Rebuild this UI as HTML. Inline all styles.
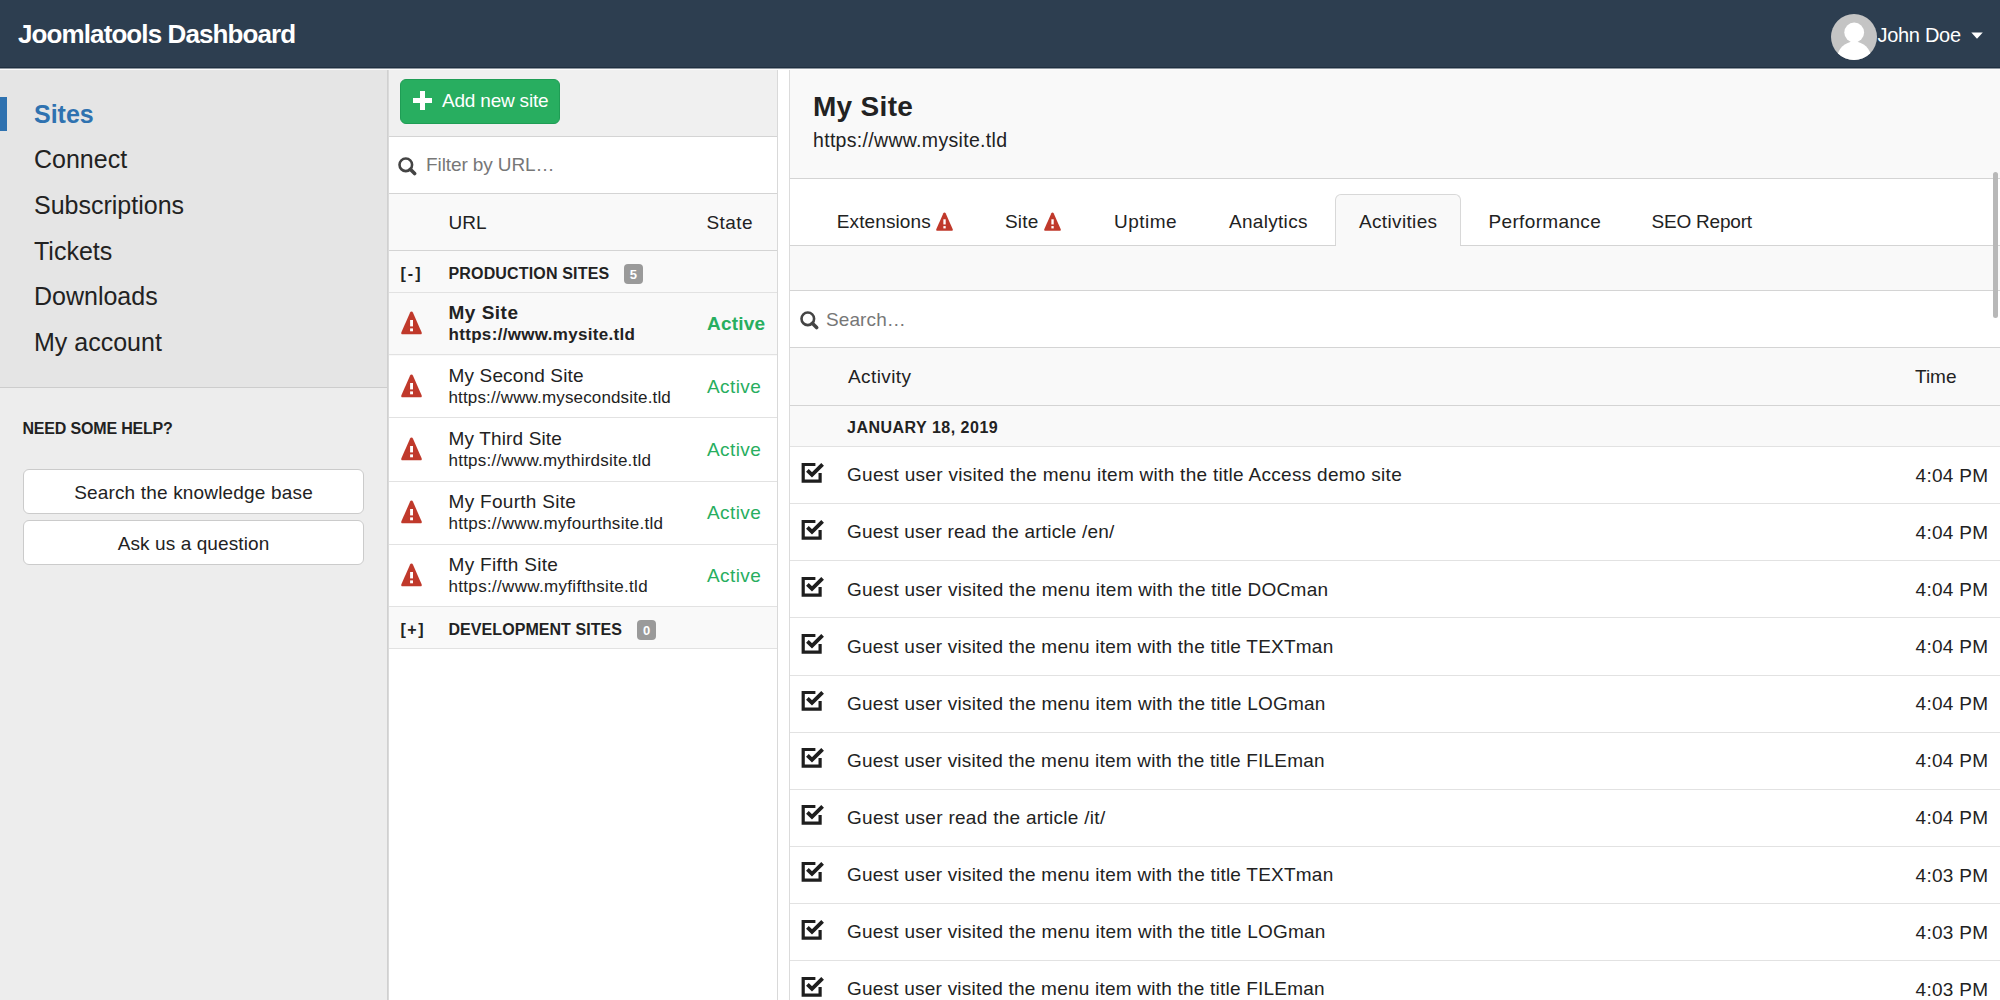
<!DOCTYPE html>
<html><head><meta charset="utf-8"><title>Joomlatools Dashboard</title>
<style>
html,body{margin:0;padding:0;width:2000px;height:1000px;overflow:hidden;background:#fff}
body{position:relative;font-family:"Liberation Sans",sans-serif}
body>div{position:absolute}
.t{white-space:nowrap}
</style></head><body>
<div style="left:0px;top:0px;width:2000px;height:67px;background:#2d3e50"></div>
<div style="left:0px;top:67px;width:2000px;height:1px;background:#1f2f40"></div>
<div style="left:0px;top:68px;width:2000px;height:1px;background:#8f98a1"></div>
<div style="left:0px;top:69px;width:2000px;height:1px;background:#fcfcfc"></div>
<div class="t" style="left:18px;top:21.19px;font-size:26px;line-height:26px;color:#fff;font-weight:700;letter-spacing:-0.9px;">Joomlatools Dashboard</div>
<svg style="position:absolute;left:1831px;top:14px" width="46" height="46" viewBox="0 0 46 46">
<defs><clipPath id="cc"><circle cx="23" cy="23" r="23"/></clipPath></defs>
<circle cx="23" cy="23" r="23" fill="#c4c4c4"/>
<g clip-path="url(#cc)" fill="#fff"><circle cx="23.2" cy="18.5" r="9.9"/><circle cx="23.2" cy="44.6" r="17"/></g></svg>
<div class="t" style="left:1877.5px;top:25.07px;font-size:20px;line-height:20px;color:#fff;letter-spacing:-0.3px;">John Doe</div>
<svg style="position:absolute;left:1971px;top:32px" width="12" height="7" viewBox="0 0 12 7"><path d="M0.3 0.5H11.8L6 6.7Z" fill="#fff"/></svg>
<div style="left:0px;top:70px;width:387px;height:317px;background:#e5e5e5"></div>
<div style="left:0px;top:387px;width:388px;height:1px;background:#cdcdcd"></div>
<div style="left:0px;top:388px;width:387px;height:612px;background:#ededed"></div>
<div style="left:387px;top:70px;width:1px;height:930px;background:#d0d0d0"></div>
<div style="left:388px;top:70px;width:1px;height:930px;background:#dadada"></div>
<div style="left:0px;top:97px;width:7px;height:34px;background:#2f72b0"></div>
<div class="t" style="left:34px;top:101.83px;font-size:25px;line-height:25px;color:#2f72b0;font-weight:700;">Sites</div>
<div class="t" style="left:34px;top:147.48px;font-size:25px;line-height:25px;color:#222;">Connect</div>
<div class="t" style="left:34px;top:193.13px;font-size:25px;line-height:25px;color:#222;">Subscriptions</div>
<div class="t" style="left:34px;top:238.78px;font-size:25px;line-height:25px;color:#222;">Tickets</div>
<div class="t" style="left:34px;top:284.43px;font-size:25px;line-height:25px;color:#222;">Downloads</div>
<div class="t" style="left:34px;top:330.08px;font-size:25px;line-height:25px;color:#222;">My account</div>
<div class="t" style="left:22.5px;top:420.95px;font-size:16px;line-height:16px;color:#222;font-weight:700;letter-spacing:-0.18px;">NEED SOME HELP?</div>
<div style="left:23px;top:469px;width:341px;height:45px;box-sizing:border-box;border:1.5px solid #cbcbcb;border-radius:6px;background:#fff"></div>
<div class="t" style="left:23px;width:341px;text-align:center;top:482.51px;font-size:19px;line-height:19px;color:#222;letter-spacing:0.17px">Search the knowledge base</div>
<div style="left:23px;top:520px;width:341px;height:45px;box-sizing:border-box;border:1.5px solid #cbcbcb;border-radius:6px;background:#fff"></div>
<div class="t" style="left:23px;width:341px;text-align:center;top:533.91px;font-size:19px;line-height:19px;color:#222;letter-spacing:0.1px">Ask us a question</div>
<div style="left:389px;top:70px;width:388px;height:66px;background:#f0f0f0"></div>
<div style="left:389px;top:136px;width:388px;height:1px;background:#d4d4d4"></div>
<div style="left:389px;top:137px;width:388px;height:56px;background:#fff"></div>
<div style="left:389px;top:193px;width:388px;height:1px;background:#d4d4d4"></div>
<div style="left:389px;top:194px;width:388px;height:56px;background:#f9f9f9"></div>
<div style="left:389px;top:250px;width:388px;height:1px;background:#d4d4d4"></div>
<div style="left:389px;top:251px;width:388px;height:41px;background:#f9f9f9"></div>
<div style="left:389px;top:292px;width:388px;height:1px;background:#e2e2e2"></div>
<div style="left:389px;top:293px;width:388px;height:63px;background:#f9f9f9"></div>
<div style="left:389px;top:356px;width:388px;height:63px;background:#fff"></div>
<div style="left:389px;top:419px;width:388px;height:63px;background:#fff"></div>
<div style="left:389px;top:482px;width:388px;height:63px;background:#fff"></div>
<div style="left:389px;top:545px;width:388px;height:63px;background:#fff"></div>
<div style="left:389px;top:607px;width:388px;height:41px;background:#f9f9f9"></div>
<div style="left:389px;top:649px;width:388px;height:351px;background:#fff"></div>
<div style="left:389px;top:354px;width:388px;height:1px;background:#e2e2e2"></div>
<div style="left:389px;top:417px;width:388px;height:1px;background:#e2e2e2"></div>
<div style="left:389px;top:481px;width:388px;height:1px;background:#e2e2e2"></div>
<div style="left:389px;top:544px;width:388px;height:1px;background:#e2e2e2"></div>
<div style="left:389px;top:606px;width:388px;height:1px;background:#e2e2e2"></div>
<div style="left:389px;top:648px;width:388px;height:1px;background:#e2e2e2"></div>
<div style="left:777px;top:70px;width:1px;height:930px;background:#d9d9d9"></div>
<div style="left:778px;top:70px;width:11px;height:930px;background:#fff"></div>
<div style="left:789px;top:70px;width:1px;height:930px;background:#dbdbdb"></div>
<div style="left:400px;top:79px;width:160px;height:45px;box-sizing:border-box;border:1.5px solid #1f9d55;border-radius:6px;background:#28ae60"></div>
<svg style="position:absolute;left:413px;top:90.5px" width="19" height="19" viewBox="0 0 19 19"><path d="M7 0H12V7H19V12H12V19H7V12H0V7H7Z" fill="#fff"/></svg>
<div class="t" style="left:442px;top:90.91px;font-size:19px;line-height:19px;color:#fff;letter-spacing:-0.2px;">Add new site</div>
<svg style="position:absolute;left:398px;top:156.5px" width="19" height="19" viewBox="0 0 19 19"><circle cx="7.8" cy="7.8" r="6.3" fill="none" stroke="#444" stroke-width="2.6"/><path d="M12.3 12.3L16.6 16.6" stroke="#444" stroke-width="3.6" stroke-linecap="round"/></svg>
<div class="t" style="left:426px;top:155.11px;font-size:19px;line-height:19px;color:#777;letter-spacing:-0.1px;">Filter by URL…</div>
<div class="t" style="left:448.5px;top:212.91px;font-size:19px;line-height:19px;color:#222;">URL</div>
<div class="t" style="left:706.5px;top:212.91px;font-size:19px;line-height:19px;color:#222;letter-spacing:0.4px;">State</div>
<div class="t" style="left:400.5px;top:266.45px;font-size:16px;line-height:16px;color:#222;font-weight:700;letter-spacing:2px;">[-]</div>
<div class="t" style="left:448.5px;top:266.45px;font-size:16px;line-height:16px;color:#222;font-weight:700;letter-spacing:0.16px;">PRODUCTION SITES</div>
<div style="left:623.8px;top:264px;width:19px;height:20px;border-radius:4px;background:#9a9a9a;color:#fff;font-size:13px;font-weight:700;line-height:21px;text-align:center">5</div>
<svg style="position:absolute;left:400.5px;top:311px" width="21" height="23.5" viewBox="0 0 21 23.5"><path d="M10.5 0.6C11.2 0.6 11.6 1 11.9 1.6L20.7 21.4C21 22.3 20.6 23.3 19.6 23.3H1.4C0.4 23.3 0 22.3 0.3 21.4L9.1 1.6C9.4 1 9.8 0.6 10.5 0.6Z" fill="#c0392b"/><rect x="9.1" y="9" width="2.9" height="6.4" fill="#fff"/><rect x="9.1" y="17.4" width="2.9" height="2.9" fill="#fff"/></svg>
<div class="t" style="left:448.5px;top:302.51px;font-size:19px;line-height:19px;color:#222;font-weight:700;letter-spacing:0.5px;">My Site</div>
<div class="t" style="left:448.5px;top:325.61px;font-size:17px;line-height:17px;color:#222;font-weight:700;letter-spacing:0.32px;">https://www.mysite.tld</div>
<div class="t" style="left:707px;top:313.91px;font-size:19px;line-height:19px;color:#27ae60;font-weight:700;letter-spacing:0.2px;">Active</div>
<svg style="position:absolute;left:400.5px;top:374px" width="21" height="23.5" viewBox="0 0 21 23.5"><path d="M10.5 0.6C11.2 0.6 11.6 1 11.9 1.6L20.7 21.4C21 22.3 20.6 23.3 19.6 23.3H1.4C0.4 23.3 0 22.3 0.3 21.4L9.1 1.6C9.4 1 9.8 0.6 10.5 0.6Z" fill="#c0392b"/><rect x="9.1" y="9" width="2.9" height="6.4" fill="#fff"/><rect x="9.1" y="17.4" width="2.9" height="2.9" fill="#fff"/></svg>
<div class="t" style="left:448.5px;top:365.51px;font-size:19px;line-height:19px;color:#222;letter-spacing:0.15px;">My Second Site</div>
<div class="t" style="left:448.5px;top:388.61px;font-size:17px;line-height:17px;color:#222;letter-spacing:0.15px;">https://www.mysecondsite.tld</div>
<div class="t" style="left:707px;top:376.91px;font-size:19px;line-height:19px;color:#27ae60;letter-spacing:0.4px;">Active</div>
<svg style="position:absolute;left:400.5px;top:437px" width="21" height="23.5" viewBox="0 0 21 23.5"><path d="M10.5 0.6C11.2 0.6 11.6 1 11.9 1.6L20.7 21.4C21 22.3 20.6 23.3 19.6 23.3H1.4C0.4 23.3 0 22.3 0.3 21.4L9.1 1.6C9.4 1 9.8 0.6 10.5 0.6Z" fill="#c0392b"/><rect x="9.1" y="9" width="2.9" height="6.4" fill="#fff"/><rect x="9.1" y="17.4" width="2.9" height="2.9" fill="#fff"/></svg>
<div class="t" style="left:448.5px;top:428.51px;font-size:19px;line-height:19px;color:#222;letter-spacing:0.15px;">My Third Site</div>
<div class="t" style="left:448.5px;top:451.61px;font-size:17px;line-height:17px;color:#222;letter-spacing:0.23px;">https://www.mythirdsite.tld</div>
<div class="t" style="left:707px;top:439.91px;font-size:19px;line-height:19px;color:#27ae60;letter-spacing:0.4px;">Active</div>
<svg style="position:absolute;left:400.5px;top:500px" width="21" height="23.5" viewBox="0 0 21 23.5"><path d="M10.5 0.6C11.2 0.6 11.6 1 11.9 1.6L20.7 21.4C21 22.3 20.6 23.3 19.6 23.3H1.4C0.4 23.3 0 22.3 0.3 21.4L9.1 1.6C9.4 1 9.8 0.6 10.5 0.6Z" fill="#c0392b"/><rect x="9.1" y="9" width="2.9" height="6.4" fill="#fff"/><rect x="9.1" y="17.4" width="2.9" height="2.9" fill="#fff"/></svg>
<div class="t" style="left:448.5px;top:491.51px;font-size:19px;line-height:19px;color:#222;letter-spacing:0.3px;">My Fourth Site</div>
<div class="t" style="left:448.5px;top:514.61px;font-size:17px;line-height:17px;color:#222;letter-spacing:0.28px;">https://www.myfourthsite.tld</div>
<div class="t" style="left:707px;top:502.91px;font-size:19px;line-height:19px;color:#27ae60;letter-spacing:0.4px;">Active</div>
<svg style="position:absolute;left:400.5px;top:563px" width="21" height="23.5" viewBox="0 0 21 23.5"><path d="M10.5 0.6C11.2 0.6 11.6 1 11.9 1.6L20.7 21.4C21 22.3 20.6 23.3 19.6 23.3H1.4C0.4 23.3 0 22.3 0.3 21.4L9.1 1.6C9.4 1 9.8 0.6 10.5 0.6Z" fill="#c0392b"/><rect x="9.1" y="9" width="2.9" height="6.4" fill="#fff"/><rect x="9.1" y="17.4" width="2.9" height="2.9" fill="#fff"/></svg>
<div class="t" style="left:448.5px;top:554.51px;font-size:19px;line-height:19px;color:#222;letter-spacing:0.32px;">My Fifth Site</div>
<div class="t" style="left:448.5px;top:577.61px;font-size:17px;line-height:17px;color:#222;letter-spacing:0.32px;">https://www.myfifthsite.tld</div>
<div class="t" style="left:707px;top:565.91px;font-size:19px;line-height:19px;color:#27ae60;letter-spacing:0.4px;">Active</div>
<div class="t" style="left:400.5px;top:622.45px;font-size:16px;line-height:16px;color:#222;font-weight:700;letter-spacing:1.5px;">[+]</div>
<div class="t" style="left:448.5px;top:622.45px;font-size:16px;line-height:16px;color:#222;font-weight:700;letter-spacing:0.06px;">DEVELOPMENT SITES</div>
<div style="left:637px;top:620px;width:19px;height:20px;border-radius:4px;background:#9a9a9a;color:#fff;font-size:13px;font-weight:700;line-height:21px;text-align:center">0</div>
<div style="left:790px;top:70px;width:1210px;height:108px;background:#f9f9f9"></div>
<div style="left:790px;top:178px;width:1210px;height:1px;background:#d4d4d4"></div>
<div style="left:790px;top:179px;width:1210px;height:66px;background:#fff"></div>
<div style="left:1335px;top:194px;width:126px;height:52px;box-sizing:border-box;border:1.5px solid #d8d8d8;border-bottom:none;border-radius:6px 6px 0 0;background:#f9f9f9"></div>
<div style="left:790px;top:245px;width:546px;height:1px;background:#d4d4d4"></div>
<div style="left:1460px;top:245px;width:540px;height:1px;background:#d4d4d4"></div>
<div style="left:790px;top:246px;width:1210px;height:44px;background:#f9f9f9"></div>
<div style="left:790px;top:290px;width:1210px;height:1px;background:#d4d4d4"></div>
<div style="left:790px;top:291px;width:1210px;height:56px;background:#fff"></div>
<div style="left:790px;top:347px;width:1210px;height:1px;background:#d4d4d4"></div>
<div style="left:790px;top:348px;width:1210px;height:57px;background:#f9f9f9"></div>
<div style="left:790px;top:405px;width:1210px;height:1px;background:#d4d4d4"></div>
<div style="left:790px;top:406px;width:1210px;height:40px;background:#f9f9f9"></div>
<div style="left:790px;top:446px;width:1210px;height:1px;background:#e2e2e2"></div>
<div style="left:790px;top:447px;width:1210px;height:553px;background:#fff"></div>
<div class="t" style="left:813px;top:92.79px;font-size:28px;line-height:28px;color:#222;font-weight:700;letter-spacing:0.3px;">My Site</div>
<div class="t" style="left:813px;top:131.49px;font-size:19.5px;line-height:19.5px;color:#222;letter-spacing:0.31px;">https://www.mysite.tld</div>
<div class="t" style="left:836.8px;top:212.41px;font-size:19px;line-height:19px;color:#222;letter-spacing:0.1px;">Extensions</div>
<div class="t" style="left:1005px;top:212.41px;font-size:19px;line-height:19px;color:#222;letter-spacing:0.2px;">Site</div>
<div class="t" style="left:1114px;top:212.41px;font-size:19px;line-height:19px;color:#222;letter-spacing:0.5px;">Uptime</div>
<div class="t" style="left:1229px;top:212.41px;font-size:19px;line-height:19px;color:#222;letter-spacing:0.3px;">Analytics</div>
<div class="t" style="left:1359px;top:212.41px;font-size:19px;line-height:19px;color:#222;letter-spacing:0.35px;">Activities</div>
<div class="t" style="left:1488.5px;top:212.41px;font-size:19px;line-height:19px;color:#222;letter-spacing:0.35px;">Performance</div>
<div class="t" style="left:1651.5px;top:212.41px;font-size:19px;line-height:19px;color:#222;letter-spacing:-0.2px;">SEO Report</div>
<svg style="position:absolute;left:935.5px;top:212px" width="17" height="19" viewBox="0 0 21 23.5"><path d="M10.5 0.6C11.2 0.6 11.6 1 11.9 1.6L20.7 21.4C21 22.3 20.6 23.3 19.6 23.3H1.4C0.4 23.3 0 22.3 0.3 21.4L9.1 1.6C9.4 1 9.8 0.6 10.5 0.6Z" fill="#c0392b"/><rect x="9.1" y="9" width="2.9" height="6.4" fill="#fff"/><rect x="9.1" y="17.4" width="2.9" height="2.9" fill="#fff"/></svg>
<svg style="position:absolute;left:1044px;top:212px" width="17" height="19" viewBox="0 0 21 23.5"><path d="M10.5 0.6C11.2 0.6 11.6 1 11.9 1.6L20.7 21.4C21 22.3 20.6 23.3 19.6 23.3H1.4C0.4 23.3 0 22.3 0.3 21.4L9.1 1.6C9.4 1 9.8 0.6 10.5 0.6Z" fill="#c0392b"/><rect x="9.1" y="9" width="2.9" height="6.4" fill="#fff"/><rect x="9.1" y="17.4" width="2.9" height="2.9" fill="#fff"/></svg>
<svg style="position:absolute;left:799.5px;top:311px" width="19" height="19" viewBox="0 0 19 19"><circle cx="7.8" cy="7.8" r="6.3" fill="none" stroke="#444" stroke-width="2.6"/><path d="M12.3 12.3L16.6 16.6" stroke="#444" stroke-width="3.6" stroke-linecap="round"/></svg>
<div class="t" style="left:826px;top:309.91px;font-size:19px;line-height:19px;color:#777;letter-spacing:0.1px;">Search…</div>
<div class="t" style="left:848px;top:366.71px;font-size:19px;line-height:19px;color:#222;letter-spacing:0.4px;">Activity</div>
<div class="t" style="left:1915px;top:366.61px;font-size:19px;line-height:19px;color:#222;">Time</div>
<div class="t" style="left:847px;top:420.45px;font-size:16px;line-height:16px;color:#222;font-weight:700;letter-spacing:0.5px;">JANUARY 18, 2019</div>
<svg style="position:absolute;left:800px;top:460.5px" width="26" height="22" viewBox="0 0 26 22"><path d="M15.4 3.5H3.2V20.2H20.1V12" fill="none" stroke="#1e1e1e" stroke-width="3.2"/><path d="M7.4 9.3L12 13.9L22.6 3.3" fill="none" stroke="#1e1e1e" stroke-width="3.8"/></svg>
<div class="t" style="left:847px;top:465.31px;font-size:19px;line-height:19px;color:#222;letter-spacing:0.29px;">Guest user visited the menu item with the title Access demo site</div>
<div class="t" style="left:1915.5px;top:465.61px;font-size:19px;line-height:19px;color:#222;letter-spacing:0.32px;">4:04 PM</div>
<div style="left:790px;top:503px;width:1210px;height:1px;background:#e2e2e2"></div>
<svg style="position:absolute;left:800px;top:517.63px" width="26" height="22" viewBox="0 0 26 22"><path d="M15.4 3.5H3.2V20.2H20.1V12" fill="none" stroke="#1e1e1e" stroke-width="3.2"/><path d="M7.4 9.3L12 13.9L22.6 3.3" fill="none" stroke="#1e1e1e" stroke-width="3.8"/></svg>
<div class="t" style="left:847px;top:522.44px;font-size:19px;line-height:19px;color:#222;letter-spacing:0.21px;">Guest user read the article /en/</div>
<div class="t" style="left:1915.5px;top:522.74px;font-size:19px;line-height:19px;color:#222;letter-spacing:0.32px;">4:04 PM</div>
<div style="left:790px;top:560px;width:1210px;height:1px;background:#e2e2e2"></div>
<svg style="position:absolute;left:800px;top:574.76px" width="26" height="22" viewBox="0 0 26 22"><path d="M15.4 3.5H3.2V20.2H20.1V12" fill="none" stroke="#1e1e1e" stroke-width="3.2"/><path d="M7.4 9.3L12 13.9L22.6 3.3" fill="none" stroke="#1e1e1e" stroke-width="3.8"/></svg>
<div class="t" style="left:847px;top:579.57px;font-size:19px;line-height:19px;color:#222;letter-spacing:0.25px;">Guest user visited the menu item with the title DOCman</div>
<div class="t" style="left:1915.5px;top:579.87px;font-size:19px;line-height:19px;color:#222;letter-spacing:0.32px;">4:04 PM</div>
<div style="left:790px;top:617px;width:1210px;height:1px;background:#e2e2e2"></div>
<svg style="position:absolute;left:800px;top:631.89px" width="26" height="22" viewBox="0 0 26 22"><path d="M15.4 3.5H3.2V20.2H20.1V12" fill="none" stroke="#1e1e1e" stroke-width="3.2"/><path d="M7.4 9.3L12 13.9L22.6 3.3" fill="none" stroke="#1e1e1e" stroke-width="3.8"/></svg>
<div class="t" style="left:847px;top:636.70px;font-size:19px;line-height:19px;color:#222;letter-spacing:0.23px;">Guest user visited the menu item with the title TEXTman</div>
<div class="t" style="left:1915.5px;top:637.00px;font-size:19px;line-height:19px;color:#222;letter-spacing:0.32px;">4:04 PM</div>
<div style="left:790px;top:675px;width:1210px;height:1px;background:#e2e2e2"></div>
<svg style="position:absolute;left:800px;top:689.02px" width="26" height="22" viewBox="0 0 26 22"><path d="M15.4 3.5H3.2V20.2H20.1V12" fill="none" stroke="#1e1e1e" stroke-width="3.2"/><path d="M7.4 9.3L12 13.9L22.6 3.3" fill="none" stroke="#1e1e1e" stroke-width="3.8"/></svg>
<div class="t" style="left:847px;top:693.83px;font-size:19px;line-height:19px;color:#222;letter-spacing:0.24px;">Guest user visited the menu item with the title LOGman</div>
<div class="t" style="left:1915.5px;top:694.13px;font-size:19px;line-height:19px;color:#222;letter-spacing:0.32px;">4:04 PM</div>
<div style="left:790px;top:732px;width:1210px;height:1px;background:#e2e2e2"></div>
<svg style="position:absolute;left:800px;top:746.1500000000001px" width="26" height="22" viewBox="0 0 26 22"><path d="M15.4 3.5H3.2V20.2H20.1V12" fill="none" stroke="#1e1e1e" stroke-width="3.2"/><path d="M7.4 9.3L12 13.9L22.6 3.3" fill="none" stroke="#1e1e1e" stroke-width="3.8"/></svg>
<div class="t" style="left:847px;top:750.96px;font-size:19px;line-height:19px;color:#222;letter-spacing:0.22px;">Guest user visited the menu item with the title FILEman</div>
<div class="t" style="left:1915.5px;top:751.26px;font-size:19px;line-height:19px;color:#222;letter-spacing:0.32px;">4:04 PM</div>
<div style="left:790px;top:789px;width:1210px;height:1px;background:#e2e2e2"></div>
<svg style="position:absolute;left:800px;top:803.28px" width="26" height="22" viewBox="0 0 26 22"><path d="M15.4 3.5H3.2V20.2H20.1V12" fill="none" stroke="#1e1e1e" stroke-width="3.2"/><path d="M7.4 9.3L12 13.9L22.6 3.3" fill="none" stroke="#1e1e1e" stroke-width="3.8"/></svg>
<div class="t" style="left:847px;top:808.09px;font-size:19px;line-height:19px;color:#222;letter-spacing:0.29px;">Guest user read the article /it/</div>
<div class="t" style="left:1915.5px;top:808.39px;font-size:19px;line-height:19px;color:#222;letter-spacing:0.32px;">4:04 PM</div>
<div style="left:790px;top:846px;width:1210px;height:1px;background:#e2e2e2"></div>
<svg style="position:absolute;left:800px;top:860.4100000000001px" width="26" height="22" viewBox="0 0 26 22"><path d="M15.4 3.5H3.2V20.2H20.1V12" fill="none" stroke="#1e1e1e" stroke-width="3.2"/><path d="M7.4 9.3L12 13.9L22.6 3.3" fill="none" stroke="#1e1e1e" stroke-width="3.8"/></svg>
<div class="t" style="left:847px;top:865.22px;font-size:19px;line-height:19px;color:#222;letter-spacing:0.23px;">Guest user visited the menu item with the title TEXTman</div>
<div class="t" style="left:1915.5px;top:865.52px;font-size:19px;line-height:19px;color:#222;letter-spacing:0.32px;">4:03 PM</div>
<div style="left:790px;top:903px;width:1210px;height:1px;background:#e2e2e2"></div>
<svg style="position:absolute;left:800px;top:917.54px" width="26" height="22" viewBox="0 0 26 22"><path d="M15.4 3.5H3.2V20.2H20.1V12" fill="none" stroke="#1e1e1e" stroke-width="3.2"/><path d="M7.4 9.3L12 13.9L22.6 3.3" fill="none" stroke="#1e1e1e" stroke-width="3.8"/></svg>
<div class="t" style="left:847px;top:922.35px;font-size:19px;line-height:19px;color:#222;letter-spacing:0.24px;">Guest user visited the menu item with the title LOGman</div>
<div class="t" style="left:1915.5px;top:922.65px;font-size:19px;line-height:19px;color:#222;letter-spacing:0.32px;">4:03 PM</div>
<div style="left:790px;top:960px;width:1210px;height:1px;background:#e2e2e2"></div>
<svg style="position:absolute;left:800px;top:974.6700000000001px" width="26" height="22" viewBox="0 0 26 22"><path d="M15.4 3.5H3.2V20.2H20.1V12" fill="none" stroke="#1e1e1e" stroke-width="3.2"/><path d="M7.4 9.3L12 13.9L22.6 3.3" fill="none" stroke="#1e1e1e" stroke-width="3.8"/></svg>
<div class="t" style="left:847px;top:979.48px;font-size:19px;line-height:19px;color:#222;letter-spacing:0.22px;">Guest user visited the menu item with the title FILEman</div>
<div class="t" style="left:1915.5px;top:979.78px;font-size:19px;line-height:19px;color:#222;letter-spacing:0.32px;">4:03 PM</div>
<div style="left:1993px;top:172px;width:4.5px;height:146px;border-radius:3px;background:#b8b8b8"></div>
</body></html>
